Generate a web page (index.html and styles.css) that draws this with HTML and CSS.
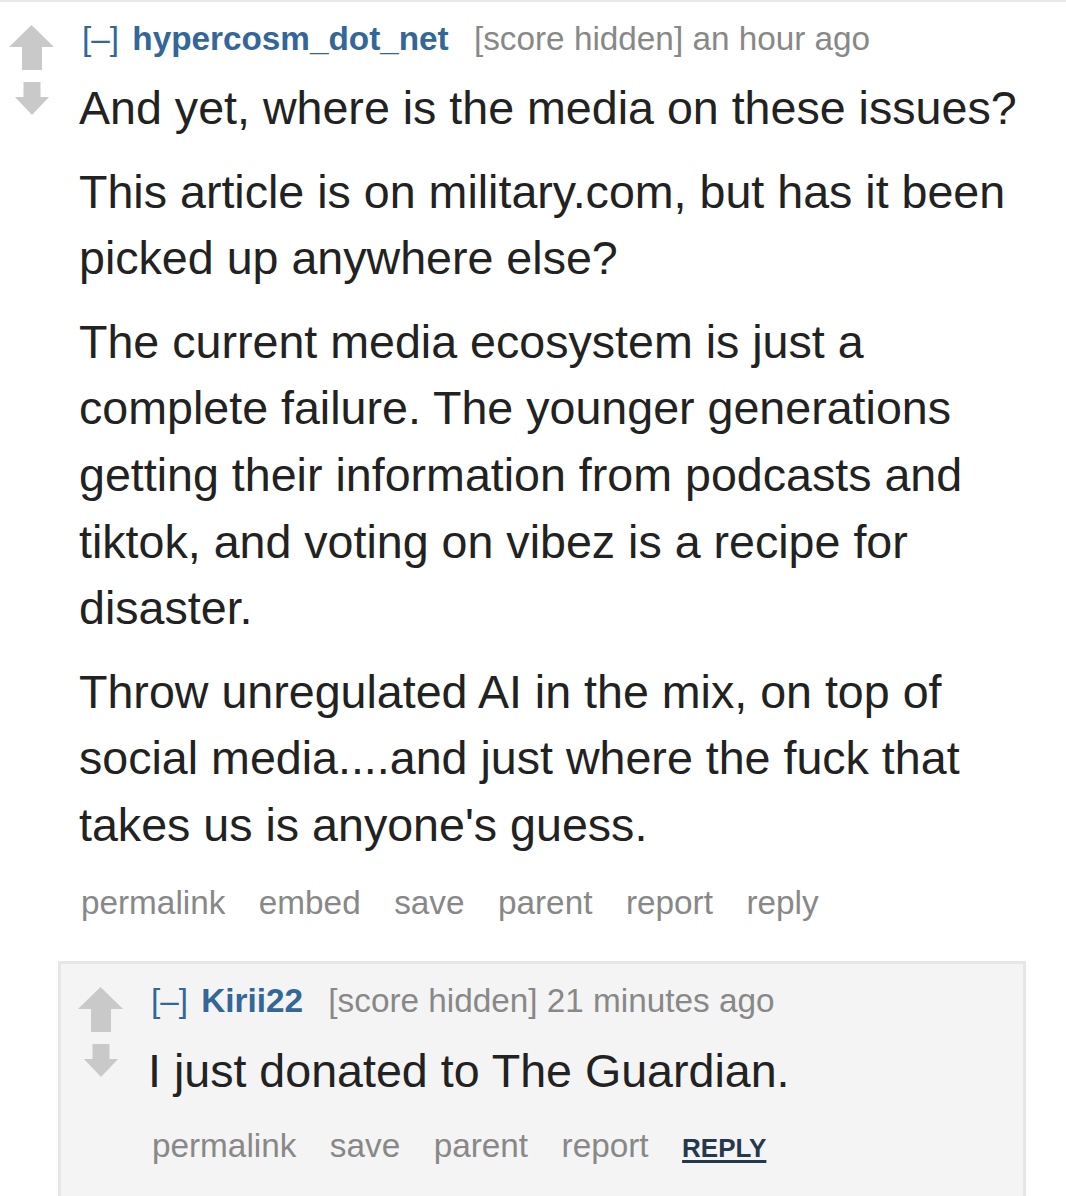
FILE: index.html
```html
<!DOCTYPE html>
<html lang="en">

<head>
    <meta charset="UTF-8">
    <meta name="viewport" content="width=device-width, initial-scale=1.0">
    <title>Comments</title>
    <link rel="stylesheet" href="styles.css">
</head>

<body>

    <div class="comment">
        <div class="thing">
            <div class="midcol">
                <svg class="arrow up" width="45" height="45" viewBox="0 0 45 45">
                    <path d="M22.5 0 L45 22 L33 22 L33 45 L13 45 L13 22 L0 22 Z" />
                </svg>
                <svg class="arrow down" width="34" height="33" viewBox="0 0 34 33">
                    <path d="M8.5 0 H25.5 V15 H34 L17 33 L0 15 H8.5 Z" />
                </svg>
            </div>
            <div class="entry">
                <p class="tagline">
                    <a class="expand" href="#">[–]</a>
                    <a class="author" href="#">hypercosm_dot_net</a>
                    <span class="score">[score hidden] an hour ago</span>
                </p>
                <div class="md">
                    <p>And yet, where is the media on these issues?</p>
                    <p>This article is on military.com, but has it been picked up anywhere else?</p>
                    <p>The current media ecosystem is just a complete failure. The younger generations getting their information from podcasts and tiktok, and voting on vibez is a recipe for disaster.</p>
                    <p>Throw unregulated AI in the mix, on top of social media....and just where the fuck that takes us is anyone's guess.</p>
                </div>
                <ul class="buttons">
                    <li><a href="#">permalink</a></li>
                    <li><a href="#">embed</a></li>
                    <li><a href="#">save</a></li>
                    <li><a href="#">parent</a></li>
                    <li><a href="#">report</a></li>
                    <li><a href="#">reply</a></li>
                </ul>
            </div>
        </div>

        <div class="child">
            <div class="thing">
                <div class="midcol">
                    <svg class="arrow up" width="45" height="45" viewBox="0 0 45 45">
                        <path d="M22.5 0 L45 22 L33 22 L33 45 L13 45 L13 22 L0 22 Z" />
                    </svg>
                    <svg class="arrow down" width="34" height="33" viewBox="0 0 34 33">
                        <path d="M8.5 0 H25.5 V15 H34 L17 33 L0 15 H8.5 Z" />
                    </svg>
                </div>
                <div class="entry">
                    <p class="tagline">
                        <a class="expand" href="#">[–]</a>
                        <a class="author" href="#">Kirii22</a>
                        <span class="score">[score hidden] 21 minutes ago</span>
                    </p>
                    <div class="md">
                        <p>I just donated to The Guardian.</p>
                    </div>
                    <ul class="buttons">
                        <li><a href="#">permalink</a></li>
                        <li><a href="#">save</a></li>
                        <li><a href="#">parent</a></li>
                        <li><a href="#">report</a></li>
                        <li><a class="reply-btn" href="#">reply</a></li>
                    </ul>
                </div>
            </div>
        </div>
    </div>

</body>

</html>
```

FILE: styles.css
```css
body {
    margin: 0;
    font-family: "Liberation Sans", Arial, sans-serif;
    background-color: #fff;
    color: #222;
}

a {
    text-decoration: none;
}

.comment {
    border-top: 2px solid #e8e8e8;
    padding: 17px 26px 0 9px;
}

.thing {
    display: flex;
    align-items: flex-start;
}

.midcol {
    width: 45px;
    flex-shrink: 0;
    margin-right: 25px;
    padding-top: 6px;
    display: flex;
    flex-direction: column;
    align-items: center;
}

.arrow {
    display: block;
    fill: #c9c9c9;
}

.arrow.down {
    margin-top: 12px;
}

.entry {
    flex: 1;
    min-width: 0;
}

.tagline {
    margin: 0;
    padding-left: 3px;
    font-size: 33.3px;
    line-height: 40px;
    color: #888;
    white-space: nowrap;
}

.expand {
    color: #369;
    margin-right: 4px;
}

.author {
    color: #369;
    font-weight: bold;
    margin-right: 16px;
}

.md {
    margin-top: 16px;
    font-size: 46.6px;
    line-height: 66.6px;
}

.md p {
    margin: 0 0 17px;
}

.md p:last-child {
    margin-bottom: 0;
}

.buttons {
    list-style: none;
    margin: 24px 0 0;
    padding: 0 0 0 2px;
    display: flex;
    gap: 33.5px;
    align-items: baseline;
    font-size: 33.3px;
    line-height: 40px;
}

.buttons a {
    color: #888;
}

.buttons .reply-btn {
    color: #24394d;
    font-weight: bold;
    font-size: 26px;
    text-transform: uppercase;
    text-decoration: underline;
    text-decoration-thickness: 3px;
    text-underline-offset: 3px;
}

.child {
    margin: 38.5px 14px 0 49px;
    background-color: #f4f4f4;
    border: 3px solid #e6e6e6;
    border-bottom: none;
    padding: 17px 26px 60px 17px;
}

.child .md {
    margin-top: 16.5px;
}

.child .buttons {
    margin-top: 22px;
    padding-left: 4px;
}
```
